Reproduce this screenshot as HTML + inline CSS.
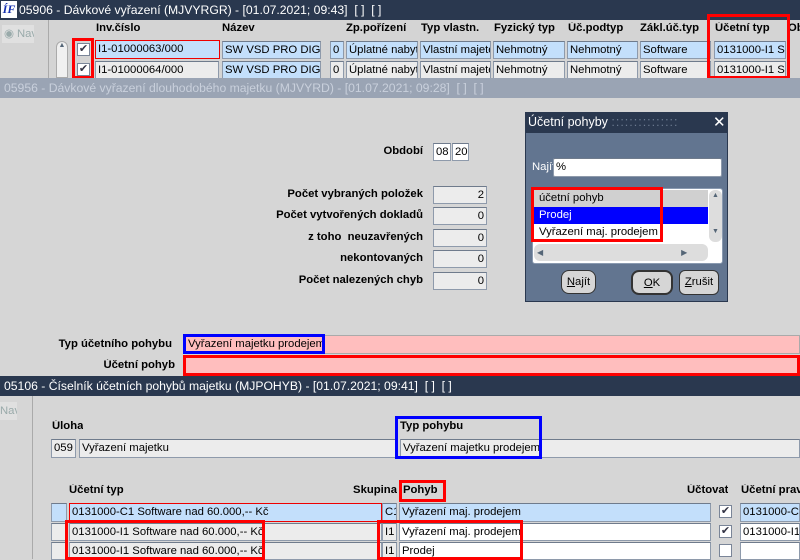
<!DOCTYPE html>
<html><head><meta charset="utf-8"><style>
*{box-sizing:border-box;margin:0;padding:0}
body{width:800px;height:559px;overflow:hidden;background:#d6d6d6;position:relative;font-family:"Liberation Sans",sans-serif;font-size:11.3px;color:#000}
.a{position:absolute;white-space:nowrap;overflow:hidden}
.tb{background:#2a384f;color:#fff;font-size:12.2px;padding-left:4px;line-height:20px}
.f{border:1px solid #8e9aab;border-top-color:#6f7b8c;background:#ececec;line-height:16px;padding-left:2px}
.lb{background:#c3dffb}
.w{background:#fff}
.b{font-weight:bold}
.r{border:3px solid #f00}
.bl{border:3px solid #00f}
.cb{width:13px;height:13px;background:#fff;border:1px solid #7a8598;font-size:11px;line-height:11px;text-align:center;color:#334}
.rt{text-align:right}
.btn{background:#d6d6d6;border:1px solid #333;border-radius:8px;text-align:center;line-height:22px}
</style></head><body>
<div class="a tb" style="left:0;top:0;width:800px;height:20px;padding-left:19px">05906 - Dávkové vyřazení (MJVYRGR) - [01.07.2021; 09:43]&nbsp; [ ]&nbsp; [ ]</div>
<div class="a" style="left:1px;top:1px;width:16px;height:17px;background:#fff;color:#1530b0;font:italic bold 12px 'Liberation Serif',serif;line-height:17px;text-align:center">ÍF</div>
<div class="a" style="left:0;top:20px;width:800px;height:58px;background:#d4d4d4"></div>
<div class="a" style="left:2px;top:25px;width:32px;height:18px;background:#e0e0e0;color:#9aa;line-height:18px;padding-left:2px">◉ Nav</div>
<div class="a" style="left:48px;top:20px;width:1px;height:58px;background:#aaa"></div>
<div class="a" style="left:56px;top:41px;width:12px;height:37px;background:#f0f0f0;border:1px solid #aaa;border-radius:6px 6px 0 0;font-size:7px;text-align:center;color:#567">▲</div>
<div class="a b" style="left:96px;top:22px">Inv.číslo</div>
<div class="a b" style="left:222px;top:22px">Název</div>
<div class="a b" style="left:346px;top:22px">Zp.pořízení</div>
<div class="a b" style="left:421px;top:22px">Typ vlastn.</div>
<div class="a b" style="left:494px;top:22px">Fyzický typ</div>
<div class="a b" style="left:568px;top:22px">Úč.podtyp</div>
<div class="a b" style="left:640px;top:22px">Zákl.úč.typ</div>
<div class="a b" style="left:715px;top:22px">Účetní typ</div>
<div class="a b" style="left:788px;top:22px">Ob</div>
<div class="a cb" style="left:77px;top:43px">✔</div>
<div class="a f lb" style="left:95px;top:40px;width:125px;height:19px;border:1px solid #e00">I1-01000063/000</div>
<div class="a f lb" style="left:222px;top:41px;width:99px;height:18px">SW VSD PRO DIGIT.</div>
<div class="a f lb" style="left:330px;top:41px;width:14px;height:18px">0 I</div>
<div class="a f lb" style="left:346px;top:41px;width:72px;height:18px">Úplatné nabytí</div>
<div class="a f lb" style="left:420px;top:41px;width:71px;height:18px">Vlastní majetek</div>
<div class="a f lb" style="left:493px;top:41px;width:72px;height:18px">Nehmotný</div>
<div class="a f lb" style="left:567px;top:41px;width:71px;height:18px">Nehmotný</div>
<div class="a f lb" style="left:640px;top:41px;width:71px;height:18px">Software</div>
<div class="a f lb" style="left:714px;top:41px;width:72px;height:18px">0131000-I1 Sc</div>
<div class="a cb" style="left:77px;top:63px">✔</div>
<div class="a f" style="left:95px;top:61px;width:124px;height:18px">I1-01000064/000</div>
<div class="a f lb" style="left:222px;top:61px;width:99px;height:18px">SW VSD PRO DIGIT.</div>
<div class="a f" style="left:330px;top:61px;width:14px;height:18px">0 I</div>
<div class="a f" style="left:346px;top:61px;width:72px;height:18px">Úplatné nabytí</div>
<div class="a f" style="left:420px;top:61px;width:71px;height:18px">Vlastní majetek</div>
<div class="a f" style="left:493px;top:61px;width:72px;height:18px">Nehmotný</div>
<div class="a f" style="left:567px;top:61px;width:71px;height:18px">Nehmotný</div>
<div class="a f" style="left:640px;top:61px;width:71px;height:18px">Software</div>
<div class="a f" style="left:714px;top:61px;width:72px;height:18px">0131000-I1 Sc</div>
<div class="a r" style="left:72px;top:38px;width:22px;height:41px"></div>
<div class="a r" style="left:707px;top:14px;width:83px;height:65px"></div>
<div class="a tb" style="left:0;top:78px;width:800px;height:20px;background:#9aa4b4;color:#c9d0dc">05956 - Dávkové vyřazení dlouhodobého majetku (MJVYRD) - [01.07.2021; 09:28]&nbsp; [ ]&nbsp; [ ]</div>
<div class="a b rt" style="left:250px;top:145px;width:173px">Období</div>
<div class="a f w" style="left:433px;top:143px;width:18px;height:18px">08</div>
<div class="a f w" style="left:452px;top:143px;width:17px;height:18px">20</div>
<div class="a b rt" style="left:200px;top:188px;width:223px">Počet vybraných položek</div>
<div class="a b rt" style="left:200px;top:209px;width:223px">Počet vytvořených dokladů</div>
<div class="a b rt" style="left:200px;top:231px;width:223px">z toho&nbsp; neuzavřených</div>
<div class="a b rt" style="left:200px;top:252px;width:223px">nekontovaných</div>
<div class="a b rt" style="left:200px;top:274px;width:223px">Počet nalezených chyb</div>
<div class="a f rt" style="left:433px;top:186px;width:54px;height:18px;padding-right:2px">2</div>
<div class="a f rt" style="left:433px;top:207px;width:54px;height:18px;padding-right:2px">0</div>
<div class="a f rt" style="left:433px;top:229px;width:54px;height:18px;padding-right:2px">0</div>
<div class="a f rt" style="left:433px;top:250px;width:54px;height:18px;padding-right:2px">0</div>
<div class="a f rt" style="left:433px;top:272px;width:54px;height:18px;padding-right:2px">0</div>
<div class="a b rt" style="left:0;top:338px;width:172px">Typ účetního pohybu</div>
<div class="a b rt" style="left:0;top:359px;width:175px">Účetní pohyb</div>
<div class="a" style="left:183px;top:335px;width:617px;height:19px;background:#ffbebe;border:1px solid #aaa"></div>
<div class="a bl" style="left:183px;top:334px;width:142px;height:20px;line-height:14px;padding-left:2px">Vyřazení majetku prodejem</div>
<div class="a r" style="left:183px;top:355px;width:617px;height:21px;background:#ffbebe"></div>
<div class="a" style="left:525px;top:112px;width:203px;height:190px;background:#627590;border:1px solid #2a384f"></div>
<div class="a" style="left:525px;top:112px;width:203px;height:21px;background:#2a384f;color:#fff;font-size:12.5px;line-height:21px;padding-left:3px">Účetní pohyby <span style="color:#6b7a90;letter-spacing:1px">:::::::::::::::</span></div>
<div class="a" style="left:713px;top:112px;color:#fff;font-size:15px;line-height:21px">✕</div>
<div class="a" style="left:532px;top:161px;color:#fff">Najít</div>
<div class="a f w" style="left:553px;top:158px;width:169px;height:19px;border-radius:2px">%</div>
<div class="a" style="left:532px;top:188px;width:191px;height:76px;background:#fff;border:1px solid #8a9ab0;border-radius:3px"></div>
<div class="a" style="left:534px;top:190px;width:174px;height:17px;background:#d0d0d0;padding-left:5px;line-height:17px">účetní pohyb</div>
<div class="a" style="left:534px;top:207px;width:174px;height:17px;background:#0000ff;color:#fff;padding-left:5px;line-height:17px">Prodej</div>
<div class="a" style="left:534px;top:224px;width:174px;height:17px;background:#fff;padding-left:5px;line-height:17px">Vyřazení maj. prodejem</div>
<div class="a" style="left:709px;top:190px;width:13px;height:52px;background:#ddd;border-radius:6px;font-size:7px;text-align:center;color:#567;line-height:12px">▲<br><br><br>▼</div>
<div class="a" style="left:534px;top:244px;width:174px;height:17px;background:#ddd;border-radius:6px;font-size:8px;line-height:17px;color:#567;padding-left:3px">◀<span style="display:inline-block;width:76px"></span><span style="display:inline-block;width:62px"></span>▶</div>
<div class="a r" style="left:531px;top:187px;width:132px;height:55px"></div>
<div class="a btn" style="left:561px;top:270px;width:35px;height:24px"><u>N</u>ajít</div>
<div class="a btn" style="left:631px;top:270px;width:42px;height:25px;border-width:2px"><u>O</u>K</div>
<div class="a btn" style="left:679px;top:270px;width:40px;height:25px;border-radius:6px"><u>Z</u>rušit</div>
<div class="a tb" style="left:0;top:376px;width:800px;height:20px">05106 - Číselník účetních pohybů majetku (MJPOHYB) - [01.07.2021; 09:41]&nbsp; [ ]&nbsp; [ ]</div>
<div class="a" style="left:0;top:402px;width:17px;height:18px;background:#e0e0e0;color:#9aa;line-height:18px">Nav</div>
<div class="a" style="left:32px;top:396px;width:1px;height:163px;background:#aaa"></div>
<div class="a b" style="left:52px;top:420px">Úloha</div>
<div class="a f" style="left:51px;top:439px;width:25px;height:19px">059</div>
<div class="a f" style="left:79px;top:439px;width:318px;height:19px">Vyřazení majetku</div>
<div class="a b" style="left:400px;top:420px">Typ pohybu</div>
<div class="a f" style="left:400px;top:439px;width:400px;height:19px">Vyřazení majetku prodejem</div>
<div class="a bl" style="left:395px;top:416px;width:147px;height:43px"></div>
<div class="a b" style="left:69px;top:484px">Účetní typ</div>
<div class="a b rt" style="left:300px;top:484px;width:97px">Skupina</div>
<div class="a b" style="left:403px;top:484px">Pohyb</div>
<div class="a b" style="left:687px;top:484px">Účtovat</div>
<div class="a b" style="left:741px;top:484px">Účetní prav</div>
<div class="a r" style="left:399px;top:480px;width:47px;height:22px"></div>
<div class="a f lb" style="left:51px;top:503px;width:16px;height:19px"></div>
<div class="a f lb" style="left:69px;top:503px;width:313px;height:19px;border-color:#e00">0131000-C1 Software nad 60.000,-- Kč</div>
<div class="a f lb" style="left:382px;top:503px;width:15px;height:19px">C1</div>
<div class="a f lb" style="left:399px;top:503px;width:312px;height:19px">Vyřazení maj. prodejem</div>
<div class="a cb" style="left:719px;top:505px">✔</div>
<div class="a f lb" style="left:740px;top:503px;width:60px;height:19px">0131000-C1</div>
<div class="a f" style="left:51px;top:523px;width:16px;height:18px"></div>
<div class="a f" style="left:69px;top:523px;width:313px;height:18px">0131000-I1 Software nad 60.000,-- Kč</div>
<div class="a f" style="left:382px;top:523px;width:15px;height:18px">I1</div>
<div class="a f w" style="left:399px;top:523px;width:312px;height:18px">Vyřazení maj. prodejem</div>
<div class="a cb" style="left:719px;top:525px">✔</div>
<div class="a f w" style="left:740px;top:523px;width:60px;height:18px">0131000-I1</div>
<div class="a f" style="left:51px;top:542px;width:16px;height:18px"></div>
<div class="a f" style="left:69px;top:542px;width:313px;height:18px">0131000-I1 Software nad 60.000,-- Kč</div>
<div class="a f" style="left:382px;top:542px;width:15px;height:18px">I1</div>
<div class="a f w" style="left:399px;top:542px;width:312px;height:18px">Prodej</div>
<div class="a cb" style="left:719px;top:544px"></div>
<div class="a f w" style="left:740px;top:542px;width:60px;height:18px"></div>
<div class="a r" style="left:65px;top:520px;width:200px;height:40px"></div>
<div class="a r" style="left:377px;top:520px;width:146px;height:40px"></div>
</body></html>
